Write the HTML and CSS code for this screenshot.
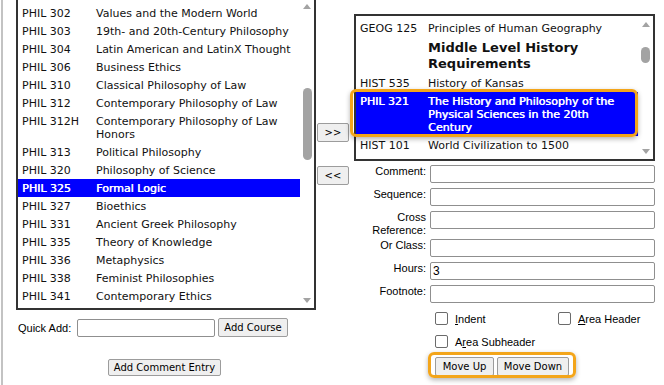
FILE: index.html
```html
<!DOCTYPE html>
<html>
<head>
<meta charset="utf-8">
<link rel="stylesheet" href="styles.css">
</head>
<body>
<div class="page">
  <div class="col-left">
    <div class="listbox listbox-left">
      <div class="list-items">
        <div class="item"><span class="code">PHIL 302</span><span class="title">Values and the Modern World</span></div>
        <div class="item"><span class="code">PHIL 303</span><span class="title">19th- and 20th-Century Philosophy</span></div>
        <div class="item"><span class="code">PHIL 304</span><span class="title">Latin American and LatinX Thought</span></div>
        <div class="item"><span class="code">PHIL 306</span><span class="title">Business Ethics</span></div>
        <div class="item"><span class="code">PHIL 310</span><span class="title">Classical Philosophy of Law</span></div>
        <div class="item"><span class="code">PHIL 312</span><span class="title">Contemporary Philosophy of Law</span></div>
        <div class="item"><span class="code">PHIL 312H</span><span class="title">Contemporary Philosophy of Law<br>Honors</span></div>
        <div class="item"><span class="code">PHIL 313</span><span class="title">Political Philosophy</span></div>
        <div class="item"><span class="code">PHIL 320</span><span class="title">Philosophy of Science</span></div>
        <div class="item selected"><span class="code">PHIL 325</span><span class="title">Formal Logic</span></div>
        <div class="item"><span class="code">PHIL 327</span><span class="title">Bioethics</span></div>
        <div class="item"><span class="code">PHIL 331</span><span class="title">Ancient Greek Philosophy</span></div>
        <div class="item"><span class="code">PHIL 335</span><span class="title">Theory of Knowledge</span></div>
        <div class="item"><span class="code">PHIL 336</span><span class="title">Metaphysics</span></div>
        <div class="item"><span class="code">PHIL 338</span><span class="title">Feminist Philosophies</span></div>
        <div class="item"><span class="code">PHIL 341</span><span class="title">Contemporary Ethics</span></div>
      </div>
      <div class="scrollbar">
        <svg class="arrow" viewBox="0 0 10 14"><polygon points="1,11 9,11 5,6"/></svg>
        <div class="thumb"></div>
        <div class="spacer"></div>
        <svg class="arrow" viewBox="0 0 10 14"><polygon points="1,4 9,4 5,9"/></svg>
      </div>
    </div>
    <div class="quick-add">
      <span class="label quick-label">Quick Add:</span>
      <input class="text-input quick-input" type="text">
      <button class="btn btn-add">Add Course</button>
    </div>
    <div class="comment-row">
      <button class="btn btn-comment">Add Comment Entry</button>
    </div>
  </div>

  <div class="col-mid">
    <button class="btn btn-move">&gt;&gt;</button>
    <button class="btn btn-move">&lt;&lt;</button>
  </div>

  <div class="col-right">
    <div class="listbox listbox-right">
      <div class="list-items">
        <div class="item"><span class="code">GEOG 125</span><span class="title">Principles of Human Geography</span></div>
        <div class="item heading"><span class="code"></span><span class="title">Middle Level History<br>Requirements</span></div>
        <div class="item"><span class="code">HIST 535</span><span class="title">History of Kansas</span></div>
        <div class="item selected"><span class="code">PHIL 321</span><span class="title">The History and Philosophy of the<br>Physical Sciences in the 20th<br>Century</span></div>
        <div class="item"><span class="code">HIST 101</span><span class="title">World Civilization to 1500</span></div>
        <div class="item"><span class="code">HIST 151</span><span class="title">History of the United States: Colonial</span></div>
      </div>
      <div class="scrollbar">
        <svg class="arrow" viewBox="0 0 10 14"><polygon points="1,11 9,11 5,6"/></svg>
        <div class="thumb"></div>
        <div class="spacer"></div>
        <svg class="arrow" viewBox="0 0 10 14"><polygon points="1,4 9,4 5,9"/></svg>
      </div>
    </div>

    <div class="form">
      <span class="label form-label">Comment:</span>
      <input class="text-input" type="text">
      <span class="label form-label">Sequence:</span>
      <input class="text-input" type="text">
      <span class="label form-label tall">Cross<br>Reference:</span>
      <input class="text-input" type="text">
      <span class="label form-label">Or Class:</span>
      <input class="text-input" type="text">
      <span class="label form-label">Hours:</span>
      <input class="text-input" type="text" value="3">
      <span class="label form-label">Footnote:</span>
      <input class="text-input" type="text">

      <div class="checks">
        <label class="check"><input type="checkbox"><span><u>I</u>ndent</span></label>
        <label class="check"><input type="checkbox"><span><u>A</u>rea Header</span></label>
        <label class="check"><input type="checkbox"><span>A<u>r</u>ea Subheader</span></label>
      </div>

      <div class="move-row">
        <div class="move-group">
          <button class="btn btn-up">Move Up</button>
          <button class="btn btn-down">Move Down</button>
        </div>
      </div>
    </div>

    <div class="row-highlight"></div>
  </div>
</div>
</body>
</html>
```

FILE: styles.css
```css
* { box-sizing: border-box; }

html, body {
  margin: 0;
  padding: 0;
  background: #fff;
}

body {
  width: 664px;
  height: 385px;
  overflow: hidden;
  font-family: "DejaVu Sans", Verdana, sans-serif;
  font-size: 11px;
  color: #111;
}

.page {
  display: grid;
  grid-template-columns: 301px 37px 301px;
  align-items: start;
  height: 385px;
  margin-left: 1px;
  border-left: 2px solid #c3c3c3;
  padding-left: 13px;
}

/* list boxes */
.listbox {
  display: flex;
  border: 2px solid #333;
  background: #fff;
  overflow: hidden;
}

.listbox-left {
  width: 300px;
  height: 314px;
  margin-top: -4px;
}

.listbox-right {
  width: 301px;
  height: 147px;
  margin-top: 14px;
}

.list-items {
  flex: 1;
  min-width: 0;
  overflow: hidden;
}

.listbox-left .list-items { padding-top: 6px; }
.listbox-right .list-items { padding-top: 3px; }

.item {
  display: flex;
  padding: 2.5px 0 2.5px 4px;
  line-height: 13px;
  white-space: nowrap;
}

.code { flex: none; }
.listbox-left .code { width: 74px; }
.listbox-right .code { width: 68px; }

.item.selected {
  background: #0000ff;
  color: #fff;
  text-shadow: 0.6px 0 0 #fff;
}

.item.heading {
  font-size: 13px;
  font-weight: bold;
  line-height: 16px;
}

.scrollbar {
  flex: none;
  display: flex;
  flex-direction: column;
  align-items: center;
}

.listbox-left .scrollbar { width: 14px; }
.listbox-right .scrollbar { width: 15px; }

.arrow {
  display: block;
  width: 10px;
  height: 14px;
  fill: #a3a3a3;
}

.thumb {
  width: 9px;
  border-radius: 5px;
  background: #a3a3a3;
}

.listbox-left .thumb { margin-top: 76px; height: 72px; }
.listbox-right .thumb { margin-top: 17px; height: 16px; }

.spacer { flex: 1; }

/* controls */
.label {
  font-family: "Liberation Sans", Arial, sans-serif;
  font-size: 11px;
  color: #000;
}

.text-input {
  height: 18px;
  margin: 0;
  border: 1px solid #8f8f8f;
  border-radius: 2px;
  padding: 0 2px;
  background: #fff;
  font: 12px "Liberation Sans", Arial, sans-serif;
  color: #000;
}

.btn {
  height: 19px;
  margin: 0;
  padding: 0 4px;
  font: 10px "DejaVu Sans", Verdana, sans-serif;
  color: #000;
  background: #efefef;
  border: 1px solid #9c9c9c;
  border-radius: 2px;
}

.quick-add {
  display: flex;
  align-items: center;
  height: 19px;
  margin-top: 8px;
  padding-left: 2px;
}

.quick-label { width: 59px; }
.quick-input { width: 138px; margin-right: 3px; }
.btn-add { width: 70px; }

.comment-row {
  display: flex;
  justify-content: center;
  margin-top: 22px;
  padding-right: 4px;
}

.btn-comment { width: 113px; height: 17px; }

.col-mid {
  display: flex;
  flex-direction: column;
  align-items: flex-start;
  gap: 24px;
  padding-top: 123px;
}

.btn-move { width: 32px; padding: 0; }

.col-right { position: relative; }

.form {
  display: grid;
  grid-template-columns: 72px 225px;
  column-gap: 4px;
  row-gap: 5px;
  margin-top: 4px;
}

.form-label {
  text-align: right;
  line-height: 13px;
  height: 18px;
}

.form-label.tall { height: 23px; }

.checks {
  grid-column: 2;
  display: grid;
  grid-template-columns: 123px 1fr;
  row-gap: 10px;
  margin-top: 4px;
}

.check {
  display: flex;
  align-items: center;
  gap: 7px;
  height: 13px;
  padding-left: 5px;
  font: 11px "Liberation Sans", Arial, sans-serif;
  color: #000;
}

.check input {
  appearance: none;
  -webkit-appearance: none;
  flex: none;
  margin: 0;
  width: 13px;
  height: 13px;
  border: 1px solid #6b6b6b;
  border-radius: 2px;
  background: #fff;
}

.move-row {
  grid-column: 2;
  display: flex;
  margin-top: 4px;
  padding-left: 5px;
}

.move-group {
  position: relative;
  display: flex;
  gap: 3px;
}

.btn-up { width: 59px; }
.btn-down { width: 72px; }

.move-group::after {
  content: "";
  position: absolute;
  left: -7px;
  right: -7px;
  top: -5px;
  bottom: -2px;
  border: 3px solid #f3a51a;
  border-radius: 6px;
  box-shadow: 0 2px 5px rgba(0, 0, 0, 0.3);
  pointer-events: none;
}

.row-highlight {
  position: absolute;
  left: -4px;
  top: 89px;
  width: 288px;
  height: 48px;
  border: 3px solid #f3a51a;
  border-radius: 6px;
  box-shadow: 0 2px 5px rgba(0, 0, 0, 0.3);
  pointer-events: none;
}
```
